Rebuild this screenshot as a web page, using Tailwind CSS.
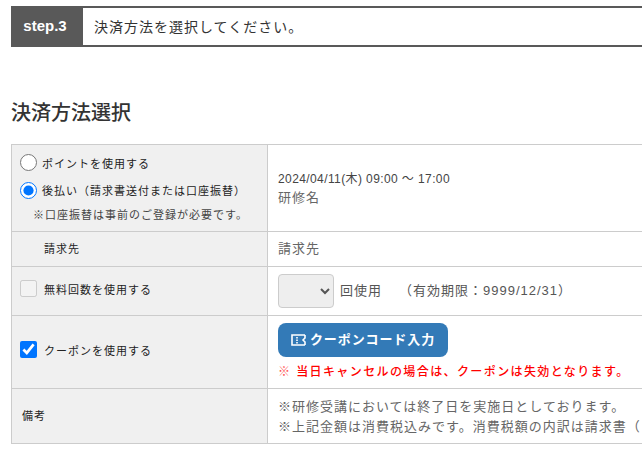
<!DOCTYPE html>
<html lang="ja">
<head>
    <meta charset="UTF-8">
    <title>決済方法選択</title>
    <script src="https://cdn.jsdelivr.net/npm/@tailwindcss/browser@4"></script>
</head>
<body class="w-[642px] h-[449px] overflow-hidden bg-white font-['Liberation_Sans','Noto_Sans_CJK_JP',sans-serif] text-[#333]">
    <div class="pl-[11px] pt-[6px] w-[900px]">
        <!-- step header -->
        <div class="flex h-[41px] border-y-2 border-[#595959]">
            <div class="w-[72px] -my-[2px] h-[41px] pr-[4px] bg-[#595959] text-white text-[15px] font-bold flex items-center justify-center">step.3</div>
            <div class="pl-[11px] pt-[1px] flex items-center text-[14px] tracking-[1px] text-[#333]">決済方法を選択してください。</div>
        </div>

        <h2 class="mt-[51px] h-[30px] text-[20px] leading-[30px] font-medium text-[#333]">決済方法選択</h2>

        <table class="mt-[16px] w-[860px] border-collapse table-fixed text-[12px]">
            <colgroup>
                <col class="w-[256px]">
                <col>
            </colgroup>
            <tbody>
                <tr class="h-[87px]">
                    <th class="border border-[#ccc] bg-[#f0f0f0] pl-[8px] font-normal text-left align-middle text-[#222]">
                        <label class="flex items-center gap-[5px] h-[24px]">
                            <input type="radio" name="pay" class="w-[17px] h-[17px] m-0 -mt-[4px]">
                            <span class="text-[11px] tracking-[1px]">ポイントを使用する</span>
                        </label>
                        <label class="flex items-center gap-[5px] h-[28px]">
                            <input type="radio" name="pay" checked class="w-[17px] h-[17px] m-0">
                            <span class="mt-[2px] text-[11px] tracking-[1px]">後払い（請求書送付または口座振替）</span>
                        </label>
                        <p class="pl-[13px] mt-[1px] text-[11px] tracking-[1px] leading-[18px] text-[#444]">※口座振替は事前のご登録が必要です。</p>
                    </th>
                    <td class="border border-[#ccc] pl-[10px] pt-[2px] align-middle">
                        <p class="text-[12px] leading-[18px] text-[#444] tracking-[0.4px]">2024/04/11(木) 09:00 ～ 17:00</p>
                        <p class="text-[13px] leading-[20px] text-[#666] tracking-[1px]">研修名</p>
                    </td>
                </tr>
                <tr class="h-[35px]">
                    <th class="border border-[#ccc] bg-[#f0f0f0] pl-[32px] font-normal text-left text-[11px] tracking-[1px] text-[#222]">請求先</th>
                    <td class="border border-[#ccc] pl-[10px] text-[13px] text-[#666] tracking-[1px]">請求先</td>
                </tr>
                <tr class="h-[49px]">
                    <th class="border border-[#ccc] bg-[#f0f0f0] pl-[8px] font-normal text-left text-[#222]">
                        <label class="flex items-center gap-[7px]">
                            <input type="checkbox" disabled class="w-[17px] h-[17px] m-0 -mt-[6px]">
                            <span class="-mt-[2px] text-[11px] tracking-[1px]">無料回数を使用する</span>
                        </label>
                    </th>
                    <td class="border border-[#ccc] pl-[10px]">
                        <div class="flex items-center text-[13px] text-[#555] tracking-[1px]">
                            <select disabled class="w-[56px] h-[34px] border border-[#ccc] rounded-[4px] bg-[#eee]"></select>
                            <span class="ml-[6px]">回使用</span>
                            <span class="ml-[17px]">（有効期限：9999/12/31）</span>
                        </div>
                    </td>
                </tr>
                <tr class="h-[73px]">
                    <th class="border border-[#ccc] bg-[#f0f0f0] pl-[8px] font-normal text-left text-[#222]">
                        <label class="flex items-center gap-[7px]">
                            <input type="checkbox" checked class="w-[17px] h-[17px] m-0 -mt-[6px]">
                            <span class="-mt-[2px] text-[11px] tracking-[1px]">クーポンを使用する</span>
                        </label>
                    </th>
                    <td class="border border-[#ccc] pl-[10px]">
                        <button class="flex items-center justify-center gap-[4px] w-[170px] h-[34px] rounded-[8px] bg-[#337ab7] text-white text-[13px] font-bold tracking-[0.9px]">
                            <svg width="15" height="12" viewBox="0 0 15 12" fill="none" stroke="white" stroke-width="1.6"><path d="M14 1H1v10h13"/><path d="M6 3v1.500M6 5.500v1.500M6 8v1.500"/><path d="M14 1v3l-2 2 2 2v3"/></svg>
                            <span>クーポンコード入力</span>
                        </button>
                        <p class="mt-[6px] text-[12px] leading-[18px] font-medium text-[#f00] tracking-[1.4px]"><span class="font-normal text-[#f55]">※</span> 当日キャンセルの場合は、クーポンは失効となります。</p>
                    </td>
                </tr>
                <tr class="h-[55px]">
                    <th class="border border-[#ccc] bg-[#f0f0f0] pl-[10px] font-normal text-left text-[11px] tracking-[1px] text-[#222]">備考</th>
                    <td class="border border-[#ccc] pl-[10px] align-top pt-[8px] text-[13px] leading-[20px] text-[#666] tracking-[1px] whitespace-nowrap">
                        <p>※研修受講においては終了日を実施日としております。</p>
                        <p>※上記金額は消費税込みです。消費税額の内訳は請求書（</p>
                    </td>
                </tr>
            </tbody>
        </table>
    </div>
</body>
</html>
